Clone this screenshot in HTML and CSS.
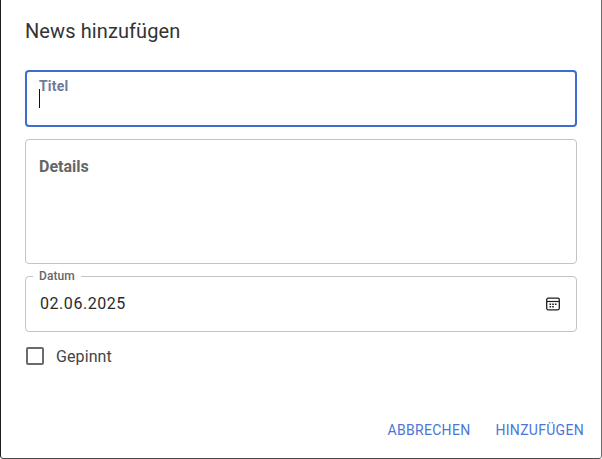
FILE: index.html
```html
<!DOCTYPE html>
<html lang="de">
<head>
<meta charset="utf-8">
<title>News hinzufügen</title>
<link rel="stylesheet" href="styles.css">
</head>
<body>
<div class="dialog">
  <h2 class="title">News hinzufügen</h2>
  <div class="form">
    <div class="field focused">
      <span class="label-inner label-focus">Titel</span>
      <span class="caret"></span>
    </div>
    <div class="field details">
      <span class="label-inner">Details</span>
    </div>
    <div class="field date">
      <span class="label-notch">Datum</span>
      <span class="value">02.06.2025</span>
      <svg class="cal" width="16" height="16" viewBox="0 0 16 16" fill="none" stroke="#1f1f1f">
        <rect x="1.7" y="2.2" width="12.6" height="11.6" rx="1.5" stroke-width="1.3"/>
        <path d="M2 5.5h12" stroke-width="1.2"/>
        <path d="M4.5 7.5h1.6v1.5H4.5zM7.2 7.5h1.6v1.5H7.2zM9.9 7.5h1.6v1.5H9.9zM4.5 10h1.6v1.5H4.5zM7.2 10h1.6v1.5H7.2z" fill="#1f1f1f" stroke="none"/>
      </svg>
    </div>
    <label class="check">
      <span class="box"></span>
      <span>Gepinnt</span>
    </label>
  </div>
  <div class="actions">
    <button class="btn">ABBRECHEN</button>
    <button class="btn">HINZUFÜGEN</button>
  </div>
</div>
</body>
</html>
```
FILE: styles.css
```css
html, body {
  margin: 0;
  height: 100%;
  background: #fff;
  font-family: Roboto, "Liberation Sans", sans-serif;
  overflow: hidden;
}
body {
  padding: 0 1px 1px 1px;
  box-sizing: border-box;
  height: 459px;
}
.dialog {
  position: relative;
  height: 458px;
  background: #fff;
  border-radius: 0 0 2px 2px;
  box-shadow: -1px 0 0 #1c1c1c, 1px 0 0 #6b6b6b, 0 1px 0 #4a4a4a;
  display: flex;
  flex-direction: column;
  box-sizing: border-box;
  padding: 0 0 0 24px;
}
.title {
  margin: 0;
  padding-top: 19px;
  font-size: 20px;
  line-height: 24px;
  font-weight: 400;
  letter-spacing: 0.1px;
  color: #333;
}
.form {
  margin-top: 27px;
  width: 552px;
  display: flex;
  flex-direction: column;
  gap: 12px;
}
.field {
  position: relative;
  box-sizing: border-box;
  height: 57px;
  border: 1px solid #c4c4c4;
  border-radius: 4px;
  padding: 0 13px;
}
.focused {
  border: 2px solid #3e6ccf;
  padding: 0 12px;
}
.details {
  height: 125px;
}
.date {
  height: 56px;
  display: flex;
  align-items: center;
  justify-content: space-between;
}
.label-inner {
  display: block;
  font-size: 16px;
  line-height: 18px;
  font-weight: 700;
  letter-spacing: 0;
  color: #666;
}
.focused .label-inner {
  margin-top: 6px;
  font-size: 14px;
  line-height: 16px;
  letter-spacing: 0.2px;
  color: #6d7a9a;
}
.details .label-inner {
  margin-top: 18px;
}
.caret {
  position: absolute;
  left: 12px;
  top: 17px;
  width: 1px;
  height: 19px;
  background: #111;
}
.label-notch {
  position: absolute;
  left: 7px;
  top: -7px;
  padding: 0 6px;
  background: #fff;
  font-size: 12px;
  line-height: 13px;
  font-weight: 500;
  letter-spacing: 0.1px;
  color: #666;
}
.value {
  font-size: 16px;
  letter-spacing: 0.55px;
  color: #2a2a2a;
  margin-left: 1px;
  margin-top: -1px;
}
.cal {
  margin-right: 2px;
  margin-left: auto;
}
.check {
  display: flex;
  align-items: center;
  gap: 12px;
  font-size: 16px;
  line-height: 20px;
  letter-spacing: 0.1px;
  color: #444;
  margin-top: 3px;
  padding-left: 1px;
}
.box {
  box-sizing: border-box;
  width: 18px;
  height: 18px;
  border: 2px solid #6a6a6a;
  border-radius: 2px;
  margin-top: -2px;
}
.actions {
  position: absolute;
  right: 9px;
  bottom: 18px;
  display: flex;
  gap: 9px;
}
.btn {
  border: 0;
  background: none;
  padding: 0 8px;
  font: 400 14px/20px Roboto, "Liberation Sans", sans-serif;
  letter-spacing: 0.3px;
  color: #4a76d6;
}
```
